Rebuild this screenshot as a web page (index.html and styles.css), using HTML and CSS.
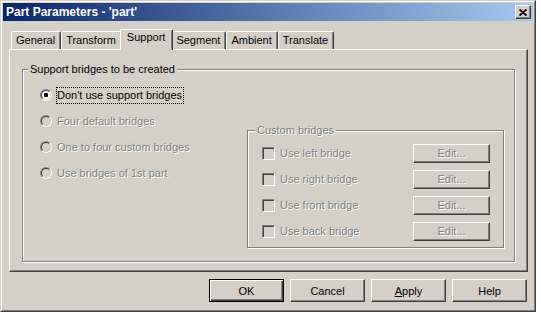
FILE: index.html
```html
<!DOCTYPE html>
<html lang="en">

<head>
    <meta charset="UTF-8">
    <title>Part Parameters</title>
    <link rel="stylesheet" href="styles.css">
</head>

<body>
    <div class="window">
        <div class="frame">
            <!-- Title bar -->
            <div class="titlebar">
                <span class="title">Part Parameters - 'part'</span>
                <span class="close-btn">
                    <svg width="8" height="7" viewBox="0 0 8 7">
                        <path d="M0.5 0.5L7.5 6.5M7.5 0.5L0.5 6.5" stroke="#000" stroke-width="1.8" fill="none" />
                    </svg>
                </span>
            </div>

            <div class="client">
                <!-- Tabs -->
                <div class="tabs">
                    <div class="tab">General</div>
                    <div class="tab">Transform</div>
                    <div class="tab active">Support</div>
                    <div class="tab">Segment</div>
                    <div class="tab">Ambient</div>
                    <div class="tab">Translate</div>
                </div>

                <!-- Support page -->
                <div class="panel">
                    <fieldset class="group main-group">
                        <legend>Support bridges to be created</legend>
                        <div class="group-body">
                            <div class="radios">
                                <div class="option">
                                    <span class="radio checked"></span>
                                    <span class="label focused">Don't use support bridges</span>
                                </div>
                                <div class="option disabled">
                                    <span class="radio"></span>
                                    <span class="label">Four default bridges</span>
                                </div>
                                <div class="option disabled">
                                    <span class="radio"></span>
                                    <span class="label">One to four custom bridges</span>
                                </div>
                                <div class="option disabled">
                                    <span class="radio"></span>
                                    <span class="label">Use bridges of 1st part</span>
                                </div>
                            </div>

                            <fieldset class="group custom-group disabled">
                                <legend>Custom bridges</legend>
                                <div class="check-row">
                                    <span class="check"></span>
                                    <span class="check-label">Use left bridge</span>
                                    <button class="btn edit" disabled>Edit...</button>
                                </div>
                                <div class="check-row">
                                    <span class="check"></span>
                                    <span class="check-label">Use right bridge</span>
                                    <button class="btn edit" disabled>Edit...</button>
                                </div>
                                <div class="check-row">
                                    <span class="check"></span>
                                    <span class="check-label">Use front bridge</span>
                                    <button class="btn edit" disabled>Edit...</button>
                                </div>
                                <div class="check-row">
                                    <span class="check"></span>
                                    <span class="check-label">Use back bridge</span>
                                    <button class="btn edit" disabled>Edit...</button>
                                </div>
                            </fieldset>
                        </div>
                    </fieldset>
                </div>

                <!-- Dialog buttons -->
                <div class="actions">
                    <button class="btn default">OK</button>
                    <button class="btn">Cancel</button>
                    <button class="btn"><u>A</u>pply</button>
                    <button class="btn">Help</button>
                </div>
            </div>
        </div>
    </div>
</body>

</html>
```

FILE: styles.css
```css
body {
    margin: 0;
    padding: 0;
    background-color: #fff;
    font-family: "Liberation Sans", Arial, sans-serif;
    font-size: 11px;
    color: #000;
}

.window {
    width: 536px;
    height: 312px;
    box-sizing: border-box;
    border: 1px solid;
    border-color: #d4d0c8 #404040 #404040 #d4d0c8;
    background-color: #d4d0c8;
}

.frame {
    height: 100%;
    box-sizing: border-box;
    border: 1px solid;
    border-color: #fff #808080 #808080 #fff;
    padding: 1px;
}

/* title bar */
.titlebar {
    height: 18px;
    display: flex;
    align-items: center;
    justify-content: space-between;
    padding: 0 2px 0 3px;
    background: linear-gradient(to right, #0a246a, #a6caf0);
}

.title {
    color: #fff;
    font-weight: bold;
    font-size: 12px;
}

.close-btn {
    width: 16px;
    height: 14px;
    box-sizing: border-box;
    border: 1px solid;
    border-color: #fff #404040 #404040 #fff;
    box-shadow: inset -1px -1px #808080;
    background-color: #d4d0c8;
    display: flex;
    align-items: center;
    justify-content: center;
}

.close-btn svg {
    display: block;
}

.client {
    padding: 8px 5px 0 6px;
}

/* tabs */
.tabs {
    display: flex;
    align-items: flex-end;
    height: 20px;
    padding-left: 2px;
    position: relative;
    z-index: 1;
}

.tab {
    height: 18px;
    box-sizing: border-box;
    border: 1px solid;
    border-bottom: none;
    border-color: #fff #404040 #404040 #fff;
    border-radius: 2px 2px 0 0;
    box-shadow: inset -1px 0 #808080;
    background-color: #d4d0c8;
    padding: 0 5px 0 4px;
    line-height: 17px;
}

.tab.active {
    height: 21px;
    margin: 0 -2px -1px;
    padding: 0 7px 0 6px;
    line-height: 15px;
    position: relative;
    z-index: 2;
}

/* page */
.panel {
    height: 223px;
    box-sizing: border-box;
    border: 1px solid;
    border-color: #fff #404040 #404040 #fff;
    box-shadow: inset -1px -1px #808080;
    padding: 13px 12px 9px 12px;
}

.group {
    margin: 0;
    min-width: 0;
    border: 1px solid #808080;
    box-shadow: inset 1px 1px #fff, 1px 1px #fff;
}

.group legend {
    padding: 0 2px;
    line-height: 13px;
    background-color: #d4d0c8;
}

.main-group {
    height: 100%;
    box-sizing: border-box;
    padding: 6px 10px 0 17px;
}

.main-group > legend {
    margin-left: -12px;
}

.group-body {
    display: flex;
}

.option {
    height: 26px;
    display: flex;
    align-items: center;
}

.radio {
    width: 12px;
    height: 12px;
    box-sizing: border-box;
    border-radius: 50%;
    border: 1px solid;
    border-color: #808080 #fff #fff #808080;
    margin-right: 4px;
    position: relative;
}

.radio::before {
    content: "";
    position: absolute;
    inset: 0;
    border-radius: 50%;
    border: 1px solid;
    border-color: #404040 #d4d0c8 #d4d0c8 #404040;
    background-color: #fff;
}

.option.disabled .radio::before {
    background-color: #d4d0c8;
}

.radio.checked::after {
    content: "";
    position: absolute;
    left: 3px;
    top: 3px;
    width: 4px;
    height: 4px;
    border-radius: 1px;
    background-color: #000;
}

.label {
    border: 1px solid transparent;
    padding: 1px 1px 1px 0;
    line-height: 13px;
}

.label.focused {
    border: 1px dotted #000;
}

.disabled .label,
.custom-group legend,
.check-label,
.btn:disabled {
    color: #808080;
    text-shadow: 1px 1px 0 #fff;
}

/* custom bridges */
.custom-group {
    width: 257px;
    box-sizing: border-box;
    margin: 42px 0 0 auto;
    padding: 3px 13px 3px 14px;
}

.custom-group > legend {
    margin-left: -7px;
}

.check-row {
    height: 26px;
    display: flex;
    align-items: center;
}

.check {
    width: 13px;
    height: 13px;
    box-sizing: border-box;
    border: 1px solid;
    border-color: #808080 #fff #fff #808080;
    box-shadow: inset 1px 1px #404040, inset -1px -1px #d4d0c8;
    background-color: #d4d0c8;
    margin-right: 5px;
}

/* buttons */
.btn {
    width: 75px;
    height: 23px;
    box-sizing: border-box;
    border: 1px solid;
    border-color: #fff #404040 #404040 #fff;
    box-shadow: inset -1px -1px #808080;
    background-color: #d4d0c8;
    font: inherit;
    color: #000;
    padding: 0;
    border-radius: 0;
}

.btn.edit {
    width: 77px;
    height: 19px;
    margin-left: auto;
}

.btn.default {
    border: 1px solid #000;
    box-shadow: inset 1px 1px #fff, inset -1px -1px #404040, inset -2px -2px #808080;
}

.actions {
    display: flex;
    justify-content: flex-end;
    gap: 6px;
    margin-top: 7px;
    padding-right: 1px;
}
```
